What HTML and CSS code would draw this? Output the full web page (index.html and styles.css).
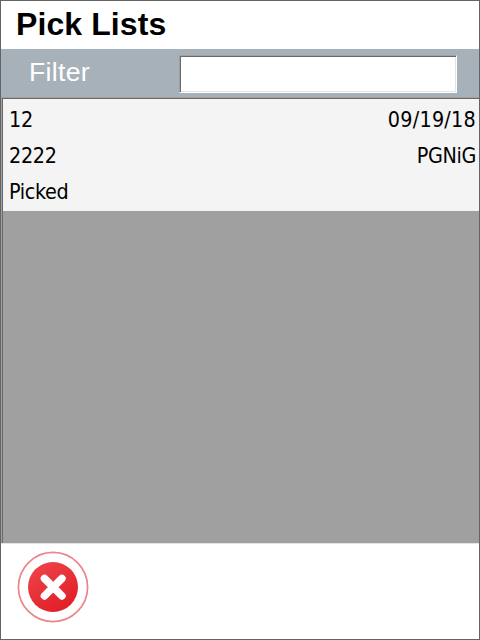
FILE: index.html
```
<!DOCTYPE html>
<html lang="en">
<head>
<meta charset="utf-8">
<title>Pick Lists</title>
<link rel="stylesheet" href="styles.css">
</head>
<body>
<main class="window">
  <h1 class="title">Pick Lists</h1>
  <div class="filter">
    <label class="filter-label" for="filter">Filter</label>
    <input class="filter-input" id="filter" type="text">
  </div>
  <section class="list">
    <article class="item">
      <div class="line"><span class="digits">12</span><span class="date">09/19/18</span></div>
      <div class="line"><span class="digits">2222</span><span class="customer">PGNiG</span></div>
      <div class="line"><span class="status">Picked</span></div>
    </article>
  </section>
  <footer class="actions">
    <button class="close" type="button" aria-label="Close">
      <svg width="72" height="72" viewBox="0 0 72 72">
        <defs>
          <linearGradient id="red" x1="0.2" y1="0" x2="0.8" y2="1">
            <stop offset="0" stop-color="#ee4349"/>
            <stop offset="1" stop-color="#df1d24"/>
          </linearGradient>
        </defs>
        <circle cx="36" cy="36" r="34.6" fill="#fff" stroke="#ec8488" stroke-width="1.7"/>
        <circle cx="36" cy="36" r="25" fill="url(#red)"/>
        <path d="M27.5 27.5l17.4 17.4M44.9 27.5l-17.4 17.4" stroke="#fff" stroke-width="7.6" stroke-linecap="round"/>
      </svg>
    </button>
  </footer>
</main>
</body>
</html>
```
FILE: styles.css
```
* {
  box-sizing: border-box;
}

body {
  margin: 0;
}

.window {
  display: flex;
  flex-direction: column;
  width: 480px;
  height: 640px;
  border: 1px solid #646464;
  background: #fff;
  color: #000;
  font-family: "Liberation Sans", Arial, sans-serif;
}

.title {
  height: 48px;
  margin: 0;
  padding-left: 15px;
  font-size: 32px;
  line-height: 46px;
  letter-spacing: 0.1px;
}

.filter {
  display: flex;
  align-items: flex-start;
  height: 48px;
  padding: 6px 22px 0 28px;
  background: #a7b1b9;
}

.filter-label {
  width: 150px;
  color: #fff;
  font-size: 26.67px;
  line-height: 34px;
  letter-spacing: 0.3px;
}

.filter-input {
  width: 278px;
  height: 38px;
  padding: 0 4px;
  border: 1px solid;
  border-color: #a0a0a0 #fff #fff #a0a0a0;
  border-radius: 0;
  outline: none;
  background: #fff;
  box-shadow: inset 1px 1px #696969, inset -1px -1px #e3e3e3;
  font: inherit;
}

.list {
  height: 447px;
  padding: 2px 0 1px 2px;
  background: #a0a0a0;
  box-shadow: inset 0 -1px #e3e3e3, inset 1px 1px #a0a0a0, inset 2px 2px #696969;
}

.item {
  height: 112px;
  padding: 3px 3px 0 6px;
  background: #f4f4f4;
  font-family: "DejaVu Sans Condensed", "DejaVu Sans", sans-serif;
  font-stretch: condensed;
  font-size: 21.33px;
  line-height: 36px;
}

.line {
  display: flex;
  justify-content: space-between;
  height: 36px;
}

.digits {
  letter-spacing: -0.3px;
}

.date {
  letter-spacing: 0.25px;
}

.customer,
.status {
  letter-spacing: -0.35px;
}

.actions {
  flex: 1;
  padding: 7px 0 0 16px;
}

.close {
  display: block;
  padding: 0;
  border: 0;
  background: none;
}

.close svg {
  display: block;
}
```
